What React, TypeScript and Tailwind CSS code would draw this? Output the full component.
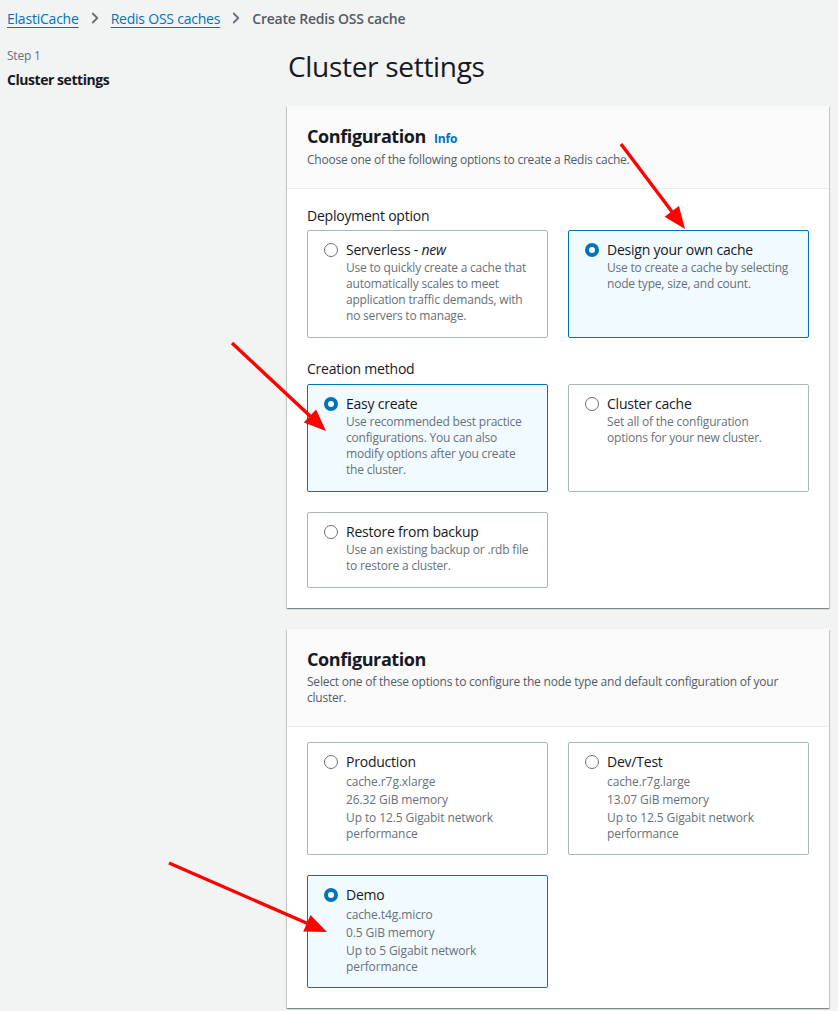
import { ChevronRight } from 'lucide-react';

interface Tile {
  title: string;
  tag?: string;
  lines: string[];
  selected?: boolean;
  specs?: boolean;
}

const deployment: Tile[] = [
  {
    title: 'Serverless - ',
    tag: 'new',
    lines: ['Use to quickly create a cache that automatically scales to meet application traffic demands, with no servers to manage.'],
  },
  {
    title: 'Design your own cache',
    lines: ['Use to create a cache by selecting node type, size, and count.'],
    selected: true,
  },
];

const creation: Tile[] = [
  {
    title: 'Easy create',
    lines: ['Use recommended best practice configurations. You can also modify options after you create the cluster.'],
    selected: true,
  },
  {
    title: 'Cluster cache',
    lines: ['Set all of the configuration', 'options for your new cluster.'],
  },
  {
    title: 'Restore from backup',
    lines: ['Use an existing backup or .rdb file to restore a cluster.'],
  },
];

const presets: Tile[] = [
  {
    title: 'Production',
    lines: ['cache.r7g.xlarge', '26.32 GiB memory', 'Up to 12.5 Gigabit network performance'],
    specs: true,
  },
  {
    title: 'Dev/Test',
    lines: ['cache.r7g.large', '13.07 GiB memory', 'Up to 12.5 Gigabit network performance'],
    specs: true,
  },
  {
    title: 'Demo',
    lines: ['cache.t4g.micro', '0.5 GiB memory', 'Up to 5 Gigabit network performance'],
    specs: true,
    selected: true,
  },
];

function Radio({ on }: { on?: boolean }) {
  return on ? (
    <span className="mt-[3px] h-[14px] w-[14px] shrink-0 rounded-full border-[4px] border-[#0073bb] bg-white" />
  ) : (
    <span className="mt-[3px] h-[14px] w-[14px] shrink-0 rounded-full border-[1.5px] border-[#687078] bg-white" />
  );
}

function OptionTile({ tile }: { tile: Tile }) {
  const pad = tile.specs ? 'pt-[9px] pb-[12px]' : 'pt-[9px] pb-[13px]';
  return (
    <div
      className={
        tile.selected
          ? `flex gap-2 rounded-[2px] border border-[#0073bb] bg-[#f1faff] px-4 ${pad}`
          : `flex gap-2 rounded-[2px] border border-[#aab7b8] bg-white px-4 ${pad}`
      }
    >
      <Radio on={tile.selected} />
      <div className="flex-1">
        <div className="text-[14px] leading-[20px] text-[#16191f]">
          {tile.title}
          {tile.tag && <i>{tile.tag}</i>}
        </div>
        {tile.lines.map((l) => (
          <p
            key={l}
            className={
              tile.specs
                ? 'mt-[2px] text-[12px] leading-[16px] tracking-[-0.1px] text-[#687078]'
                : 'text-[12px] leading-[16px] tracking-[-0.2px] text-[#687078]'
            }
          >
            {l}
          </p>
        ))}
      </div>
    </div>
  );
}

function Arrows() {
  const arrow = (x1: number, y1: number, x2: number, y2: number) => {
    const a = Math.atan2(y2 - y1, x2 - x1);
    const len = 22;
    const w = 9;
    const bx = x2 - len * Math.cos(a);
    const by = y2 - len * Math.sin(a);
    const px = -Math.sin(a) * w;
    const py = Math.cos(a) * w;
    return (
      <g key={`${x1}-${y1}`}>
        <line x1={x1} y1={y1} x2={bx + 2 * Math.cos(a)} y2={by + 2 * Math.sin(a)} stroke="#ff0000" strokeWidth="3.4" />
        <polygon points={`${x2},${y2} ${bx + px},${by + py} ${bx - px},${by - py}`} fill="#ff0000" />
      </g>
    );
  };
  return (
    <svg className="pointer-events-none absolute left-0 top-0" width="838" height="1011">
      {arrow(621, 144, 685, 229)}
      {arrow(232, 343, 326, 431)}
      {arrow(169, 863, 327, 932)}
    </svg>
  );
}

export default function App() {
  return (
    <div className="relative min-h-[1011px] w-[838px] overflow-hidden bg-[#f2f3f3] tracking-[-0.22px] text-[#16191f]" style={{ fontFamily: '"Open Sans", "Noto Sans", Arial, sans-serif' }}>
      {/* Breadcrumb */}
      <nav className="flex h-[36px] items-center pl-[7px] text-[14px]">
        <span className="text-[#0073bb] underline decoration-1 underline-offset-[3px]">ElastiCache</span>
        <ChevronRight size={18} strokeWidth={2.4} className="mx-[7px] text-[#687078]" />
        <span className="text-[#0073bb] underline decoration-1 underline-offset-[3px]">Redis OSS caches</span>
        <ChevronRight size={18} strokeWidth={2.4} className="mx-[7px] text-[#687078]" />
        <span className="font-semibold tracking-[-0.2px] text-[#545b64]">Create Redis OSS cache</span>
      </nav>

      <div className="flex">
        {/* Steps */}
        <aside className="w-[287px] shrink-0 pl-[7px] pt-[11px]">
          <p className="text-[12px] leading-[18px] text-[#687078]">Step 1</p>
          <p className="mt-[5px] text-[14px] font-bold leading-[20px] tracking-[-0.45px]">Cluster settings</p>
        </aside>

        {/* Main */}
        <main className="w-[542px] pb-4">
          <h1 className="ml-[1px] mt-[12px] text-[28px] leading-[36px] tracking-[-0.3px] text-[#16191f]">Cluster settings</h1>

          <section className="mt-[22px] bg-white shadow-[0_1px_1px_0_rgba(0,28,36,0.3),1px_1px_1px_0_rgba(0,28,36,0.15),-1px_1px_1px_0_rgba(0,28,36,0.15)]">
            <header className="border-b border-[#eaeded] bg-[#fafafa] px-5 pt-[19px] pb-[20px]">
              <div className="flex items-baseline gap-[8px]">
                <h2 className="text-[18px] font-bold leading-[22px] tracking-[-0.4px]">Configuration</h2>
                <span className="text-[12px] font-bold text-[#0073bb]">Info</span>
              </div>
              <p className="mt-[4px] text-[12px] leading-[16px] text-[#545b64]">Choose one of the following options to create a Redis cache.</p>
            </header>
            <div className="px-5 pt-[17px] pb-[20px]">
              <p className="text-[14px] leading-[20px]">Deployment option</p>
              <div className="mt-[4px] grid grid-cols-2 gap-5">
                {deployment.map((t) => (
                  <OptionTile key={t.title} tile={t} />
                ))}
              </div>
              <p className="mt-[21px] text-[14px] leading-[20px]">Creation method</p>
              <div className="mt-[5px] grid grid-cols-2 gap-5">
                {creation.map((t) => (
                  <OptionTile key={t.title} tile={t} />
                ))}
              </div>
            </div>
          </section>

          <section className="mt-[21px] bg-white shadow-[0_1px_1px_0_rgba(0,28,36,0.3),1px_1px_1px_0_rgba(0,28,36,0.15),-1px_1px_1px_0_rgba(0,28,36,0.15)]">
            <header className="border-b border-[#eaeded] bg-[#fafafa] px-5 pt-[19px] pb-[20px]">
              <h2 className="text-[18px] font-bold leading-[22px] tracking-[-0.4px]">Configuration</h2>
              <p className="mt-[4px] text-[12px] leading-[16px] text-[#545b64]">
                Select one of these options to configure the node type and default configuration of your cluster.
              </p>
            </header>
            <div className="grid grid-cols-2 gap-5 px-5 pt-[15px] pb-[20px]">
              {presets.map((t) => (
                <OptionTile key={t.title} tile={t} />
              ))}
            </div>
          </section>
        </main>
      </div>

      <Arrows />
    </div>
  );
}
